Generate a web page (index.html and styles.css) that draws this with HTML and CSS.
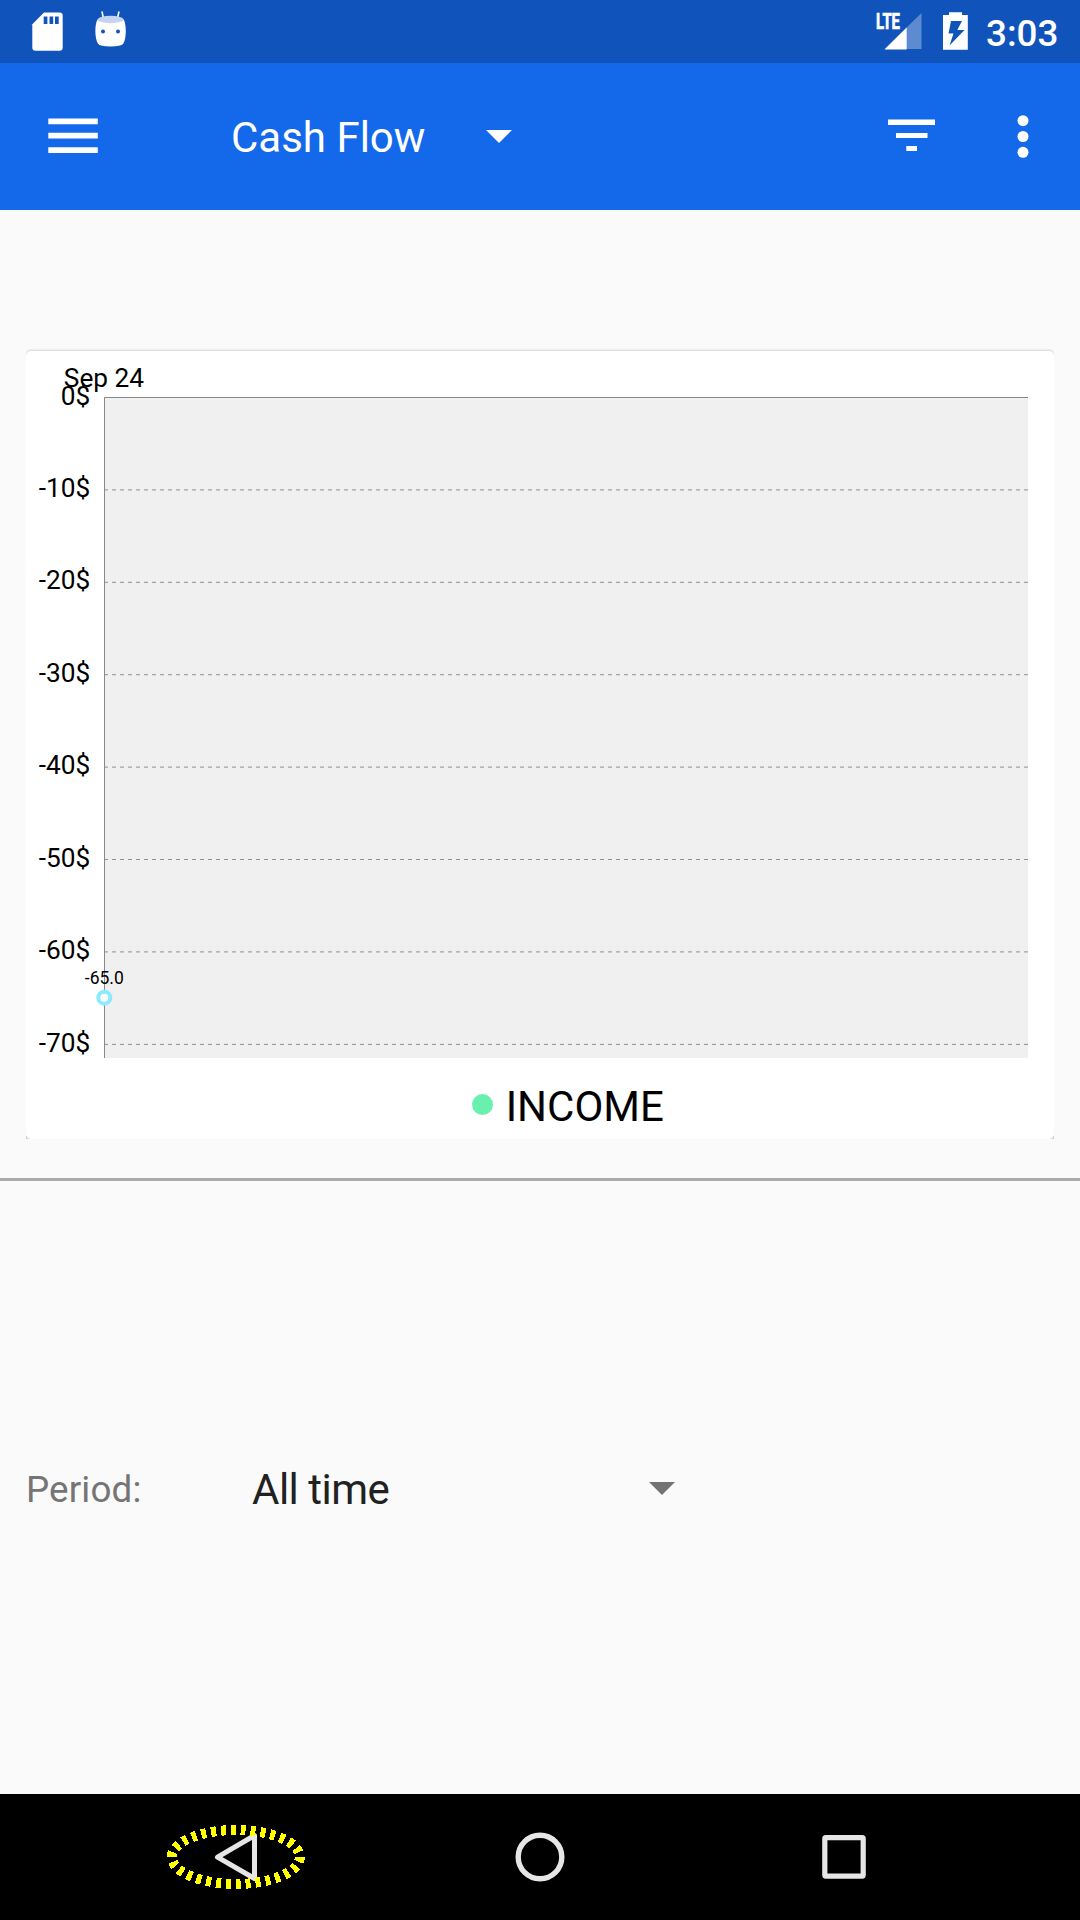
FILE: index.html
```html
<!DOCTYPE html>
<html lang="en">
<head>
<meta charset="utf-8">
<title>Cash Flow</title>
<link rel="stylesheet" href="styles.css">
</head>
<body>
<div class="screen">
  <header class="status-bar">
    <svg class="status-left" width="140" height="63" viewBox="0 0 140 63">
      <path fill="#fff" d="M44 12.5H59.500Q62.700 12.500 62.700 15.700V47.500Q62.700 50.700 59.500 50.700H35.500Q32.300 50.700 32.300 47.500V24.300Z"/>
      <path fill="#1054bb" d="M43.700 16.500h3.700v7.500h-3.700zM49.500 16.500h3.700v7.500h-3.700zM55 16.500h3.700v7.500h-3.700z"/>
      <path d="M102 11.500L103.400 18.500M119 11.500L117.400 18.500" stroke="#fff" stroke-width="1.600"/>
      <path fill="#fff" d="M97.600 19.500C94.500 24 94.600 38.500 98 43.800Q100 46.500 110.500 46.500Q121 46.500 123.200 43.800C126.600 38.500 126.500 24 123.600 19.500Z"/>
      <ellipse cx="110.600" cy="19.500" rx="13" ry="3.700" fill="#c4d4ee"/>
      <circle cx="103" cy="31.500" r="2" fill="#1054bb"/>
      <circle cx="118" cy="31.500" r="2" fill="#1054bb"/>
    </svg>
    <svg class="status-right" width="110" height="63" viewBox="870 0 110 63">
      <path d="M921.500 13V49H884.500Z" fill="#fff" fill-opacity=".32"/>
      <path d="M906.700 27.500V49.500H884.500Z" fill="#fff"/>
      <text class="lte" x="876" y="29" textLength="24" lengthAdjust="spacingAndGlyphs">LTE</text>
      <path fill="#fff" fill-rule="evenodd" d="M949 12.300H962V15H967.800V49.700H943V15H949ZM951 21H962L957.300 30H964.500L949.500 45.500L953.500 33.500H948.500Z"/>
    </svg>
    <span class="clock">3:03</span>
  </header>
  <nav class="toolbar">
    <svg class="menu" width="50" height="36" viewBox="0 0 50 36"><path fill="#fff" d="M.300 .500h49.500v5.800H.300zM.300 14.800h49.500v5.700H.300zM.300 29.200h49.500v5.700H.300z"/></svg>
    <span class="title">Cash Flow</span>
    <svg class="caret" width="26" height="13" viewBox="0 0 26 13"><path fill="#fff" d="M0 0H26L13 13Z"/></svg>
    <svg class="filter" width="47" height="33" viewBox="0 0 47 33"><path fill="#fff" d="M0 .600h47v5.500H0zM8 14h31.500v5H8zM18.300 27h10.700v5H18.300z"/></svg>
    <svg class="more" width="12" height="44" viewBox="0 0 12 44"><g fill="#fff"><circle cx="6" cy="5.700" r="5.500"/><circle cx="6" cy="21.500" r="5.500"/><circle cx="6" cy="37.300" r="5.500"/></g></svg>
  </nav>
  <main class="content">
    <section class="card">
      <svg class="chart" width="1028" height="788" viewBox="26 351 1028 788">
        <rect x="104" y="397" width="924" height="661" fill="#f0f0f0"/>
        <g class="grid">
          <path d="M104 489.900H1028"/>
          <path d="M104 582.300H1028"/>
          <path d="M104 674.700H1028"/>
          <path d="M104 767.100H1028"/>
          <path d="M104 859.500H1028"/>
          <path d="M104 951.900H1028"/>
          <path d="M104 1044.400H1028"/>
        </g>
        <path d="M104.500 1058V397.500H1028" fill="none" stroke="#888" stroke-width="1"/>
        <g class="axis-labels">
          <text x="90.300" y="405">0$</text>
          <text x="90.300" y="497">-10$</text>
          <text x="90.300" y="589">-20$</text>
          <text x="90.300" y="682">-30$</text>
          <text x="90.300" y="774">-40$</text>
          <text x="90.300" y="867">-50$</text>
          <text x="90.300" y="959">-60$</text>
          <text x="90.300" y="1052">-70$</text>
        </g>
        <text class="date-label" x="104" y="387">Sep 24</text>
        <circle cx="104.300" cy="997.700" r="6" fill="#fff" stroke="#8ceaff" stroke-width="4"/>
        <text class="value-label" x="104.300" y="984">-65.0</text>
        <circle cx="482.500" cy="1104.600" r="10.500" fill="#69f0ae"/>
        <text class="legend" x="505.700" y="1121">INCOME</text>
        <path d="M26 1135V1139H30Q27 1138 26 1135ZM1054 1135V1139H1050Q1053 1138 1054 1135Z" fill="#d0d0d0"/>
      </svg>
    </section>
    <hr class="divider">
    <section class="period-row">
      <span class="period-label">Period:</span>
      <span class="period-value">All time</span>
      <svg class="period-caret" width="26" height="13" viewBox="0 0 26 13"><path fill="#737373" d="M0 0H26L13 13Z"/></svg>
    </section>
  </main>
  <footer class="nav-bar">
    <svg width="1080" height="126" viewBox="0 1794 1080 126" fill="none">
      <path d="M254.500 1835.500V1878.500L217.500 1857.200Z" stroke="#e6e6e6" stroke-width="5" stroke-linejoin="round"/>
      <circle cx="540" cy="1857" r="21.800" stroke="#e6e6e6" stroke-width="5.400"/>
      <rect x="824.800" y="1837.700" width="38.400" height="38.400" rx="1" stroke="#e6e6e6" stroke-width="5.200"/>
      <ellipse cx="235.800" cy="1857" rx="64" ry="27" pathLength="300" stroke="#ff0" stroke-width="10" stroke-dasharray="5 5" shape-rendering="crispEdges"/>
    </svg>
  </footer>
</div>
</body>
</html>
```

FILE: styles.css
```css
* { box-sizing: border-box; }
body { margin: 0; font-family: Roboto, sans-serif; background: #fafafa; }
svg { display: block; flex: none; }
.screen { width: 1080px; height: 1920px; display: flex; flex-direction: column; overflow: hidden; }
.status-bar { height: 63px; flex: none; display: flex; background: #1054bb; color: #fff; }
.status-right { margin-left: 730px; }
.clock { margin-left: 6px; font-size: 36.75px; font-weight: 500; line-height: 68px; }
.lte { font: bold 21.5px Roboto, sans-serif; fill: #fff; stroke: #fff; stroke-width: .7px; }
.toolbar { height: 147px; flex: none; display: flex; align-items: flex-start; padding-left: 48px; background: #1469eb; color: #fff; }
.menu { margin-top: 55px; }
.title { width: 200px; margin: 50px 0 0 133px; font-size: 42px; line-height: 50px; white-space: nowrap; }
.caret { margin: 67px 0 0 55px; }
.filter { margin: 56px 0 0 376px; }
.more { margin: 52px 0 0 81.500px; }
.content { flex: 1; display: flex; flex-direction: column; }
.card { width: 1028px; height: 788px; margin: 141px 26px 0; flex: none; background: #fff; border-radius: 5px 5px 0 0; box-shadow: 0 -1px 2px rgba(0, 0, 0, .16); clip-path: inset(-4px 0 0 0); }
.grid path { fill: none; stroke: #909090; stroke-width: 1; stroke-dasharray: 4 4; }
.axis-labels { font-size: 26.25px; text-anchor: end; }
.date-label { font-size: 26.25px; text-anchor: middle; }
.value-label { font-size: 17.5px; text-anchor: middle; }
.legend { font-size: 42px; }
.divider { width: 100%; height: 3px; margin: 39px 0 0; border: 0; flex: none; background: #aaa; }
.period-row { display: flex; align-items: flex-start; margin-top: 283px; padding-left: 26px; }
.period-label { width: 226px; margin-top: 4px; font-size: 36.75px; line-height: 44px; letter-spacing: .15px; color: #757575; }
.period-value { width: 397px; margin-top: 1px; font-size: 42px; line-height: 50px; letter-spacing: -.5px; color: #212121; }
.period-caret { margin-top: 18px; }
.nav-bar { height: 126px; flex: none; background: #000; }
```
